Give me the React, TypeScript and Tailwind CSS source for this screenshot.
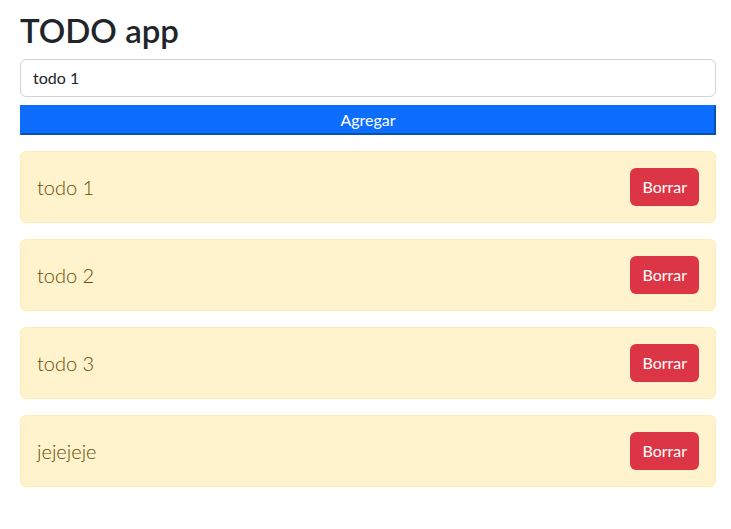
import React, { useState } from 'react';

const App = () => {
  const [text, setText] = useState('todo 1');
  const [todos, setTodos] = useState(['todo 1', 'todo 2', 'todo 3', 'jejejeje']);

  const agregar = () => {
    if (text.trim() === '') return;
    setTodos([...todos, text]);
  };

  const borrar = (i: number) => {
    setTodos(todos.filter((_, idx) => idx !== i));
  };

  return (
    <div className="min-h-screen bg-white pl-5 pr-[15px] pt-[11px] text-[#212529] [font-family:Lato,'Noto_Sans',sans-serif]">
      <h1 className="mb-2 text-[33px] font-semibold leading-[1.2]">TODO app</h1>
      <input
        value={text}
        onChange={(e) => setText(e.target.value)}
        className="block h-[38px] w-full rounded-md border border-[#ced4da] bg-white px-3 text-base text-[#212529] outline-none"
      />
      <button
        onClick={agregar}
        className="mt-2 block h-[30px] w-full border-2 border-t-[#0d6efd] border-l-[#0d6efd] border-r-[#0a4fb3] border-b-[#0a4fb3] bg-[#0d6efd] text-base leading-6 text-white"
      >
        Agregar
      </button>
      <ul className="mt-4">
        {todos.map((t, i) => (
          <li
            key={i}
            className="mb-4 flex items-center justify-between rounded-md border border-[#ffecb5] bg-[#fff3cd] p-4 text-[#664d03]"
          >
            <span className="text-xl font-light">{t}</span>
            <button
              onClick={() => borrar(i)}
              className="h-[38px] rounded-md bg-[#dc3545] px-3 text-base text-white"
            >
              Borrar
            </button>
          </li>
        ))}
      </ul>
    </div>
  );
};

export default App;
